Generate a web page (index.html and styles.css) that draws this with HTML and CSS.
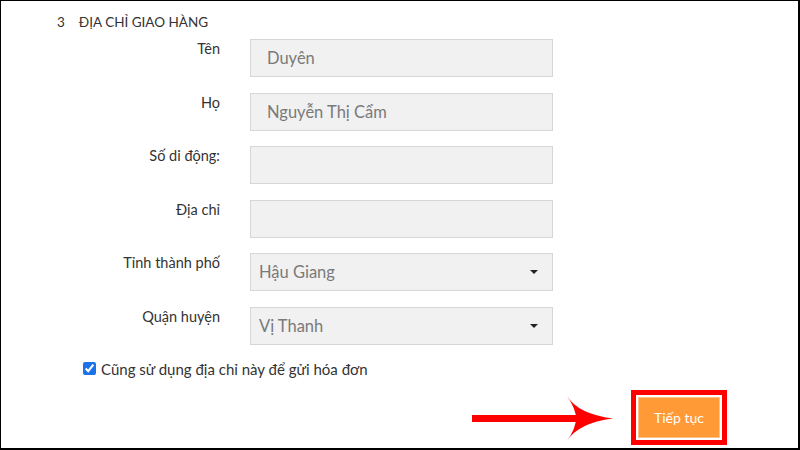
FILE: index.html
```html
<!DOCTYPE html>
<html lang="vi">
<head>
<meta charset="utf-8">
<title>Địa chỉ giao hàng</title>
<link rel="stylesheet" href="styles.css">
</head>
<body>
<div class="frame">
  <h2 class="step"><span class="step-num">3</span><span>ĐỊA CHỈ GIAO HÀNG</span></h2>
  <form class="form">
    <label class="lbl">Tên</label>
    <div class="field"><span class="val">Duyên</span></div>
    <label class="lbl">Họ</label>
    <div class="field"><span class="val">Nguyễn Thị Cẩm</span></div>
    <label class="lbl">Số di động:</label>
    <div class="field"></div>
    <label class="lbl">Địa chỉ</label>
    <div class="field"></div>
    <label class="lbl">Tỉnh thành phố</label>
    <div class="field select"><span class="val">Hậu Giang</span><span class="caret"></span></div>
    <label class="lbl">Quận huyện</label>
    <div class="field select"><span class="val">Vị Thanh</span><span class="caret"></span></div>
  </form>
  <div class="check-row">
    <input type="checkbox" class="chk" checked>
    <span>Cũng sử dụng địa chỉ này để gửi hóa đơn</span>
  </div>
  <div class="action-row">
    <svg class="arrow" width="142" height="50" viewBox="0 0 142 50">
      <rect x="0" y="21" width="106" height="7" fill="#ff0000"/>
      <path d="M95 2 Q106 20 141 24.5 Q106 29 95 47 Q104 34 104 24.5 Q104 15 95 2 Z" fill="#ff0000"/>
    </svg>
    <div class="highlight"><button type="button" class="btn">Tiếp tục</button></div>
  </div>
</div>
</body>
</html>
```
FILE: styles.css
```css
html, body {
  margin: 0;
  padding: 0;
  background: #fff;
}
.frame {
  width: 800px;
  height: 450px;
  box-sizing: border-box;
  border-top: 1px solid #000;
  border-left: 1px solid #000;
  border-right: 2px solid #000;
  border-bottom: 2px solid #000;
  font-family: "Lato", "Open Sans", sans-serif;
  color: #333;
  overflow: hidden;
}
.step {
  margin: 0;
  padding: 13px 0 0 56px;
  font-size: 13.5px;
  font-weight: 400;
  line-height: 17px;
  display: flex;
  gap: 14px;
  color: #333;
}
.form {
  margin: 8px 0 0 0;
  display: grid;
  grid-template-columns: 219px 303px;
  column-gap: 30px;
  row-gap: 15.6px;
  grid-auto-rows: 38px;
}
.lbl {
  text-align: right;
  font-size: 14.5px;
  line-height: 20px;
  color: #333;
}
.field {
  box-sizing: border-box;
  height: 38px;
  background: #f1f1f1;
  border: 1px solid #d6d6d6;
  display: flex;
  align-items: center;
  padding-left: 16px;
  padding-right: 14px;
  font-size: 16.5px;
  color: #7a7a7a;
}
.field.select {
  padding-left: 8px;
  justify-content: space-between;
}
.caret {
  width: 0;
  height: 0;
  border-left: 4px solid transparent;
  border-right: 4px solid transparent;
  border-top: 4px solid #222;
}
.check-row {
  margin: 15px 0 0 82px;
  display: flex;
  align-items: center;
  gap: 5px;
  font-size: 15px;
  color: #333;
}
.chk {
  margin: 0;
  width: 13px;
  height: 13px;
  accent-color: #1a73e8;
}
.action-row {
  margin-top: 12px;
  display: flex;
  justify-content: flex-end;
  align-items: center;
  padding-right: 71px;
  gap: 17px;
}
.arrow {
  display: block;
  margin-top: 3px;
}
.highlight {
  box-sizing: border-box;
  width: 96px;
  height: 55px;
  border: 5px solid #ff0000;
  padding: 2px;
  background: #fff;
}
.btn {
  width: 100%;
  height: 100%;
  box-sizing: border-box;
  background: #ff9a36;
  border: 1px solid #ffc38a;
  color: #fff;
  font-family: "Lato", "Open Sans", sans-serif;
  font-size: 14px;
  padding: 0;
  cursor: pointer;
}
```
